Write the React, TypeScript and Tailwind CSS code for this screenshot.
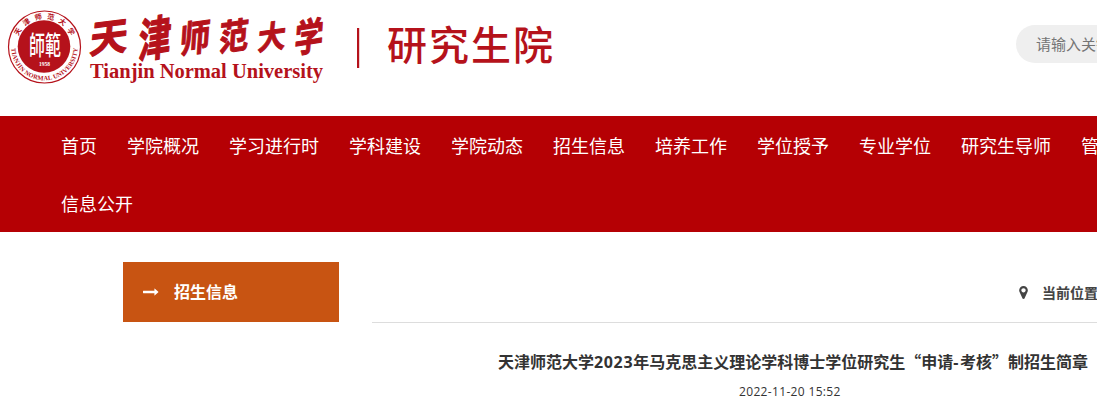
const navItems = [
  "首页", "学院概况", "学习进行时", "学科建设", "学院动态", "招生信息",
  "培养工作", "学位授予", "专业学位", "研究生导师", "管理规定",
];

const wordmark = [
  { ch: "天", cx: 109, cy: 37, sx: 1.06, sy: 1.06 },
  { ch: "津", cx: 155, cy: 38, sx: 0.9, sy: 1.3 },
  { ch: "师", cx: 195, cy: 37.5, sx: 0.84, sy: 1.02 },
  { ch: "范", cx: 234, cy: 36, sx: 0.82, sy: 0.98 },
  { ch: "大", cx: 272, cy: 36.5, sx: 0.78, sy: 0.88 },
  { ch: "学", cx: 309, cy: 36.5, sx: 0.8, sy: 1.06 },
];

function Seal() {
  return (
    <g fill="#b5121b" textAnchor="middle">
      <circle cx="44.5" cy="47" r="36" fill="#fff" stroke="#b5121b" strokeWidth="1.2" />
      <circle cx="44" cy="46.5" r="26.3" />
      <path id="sealTop" d="M16.3 47a28.2 28.2 0 0 1 56.4 0" fill="none" />
      <path id="sealBottom" d="M11.2 47a33.3 33.3 0 0 0 66.6 0" fill="none" />
      <text fontSize="7.2" fontWeight="700" className="font-['Noto_Sans_CJK_SC',sans-serif]">
        <textPath href="#sealTop" startOffset="50%" textLength="66">天津师范大学</textPath>
      </text>
      <text fontSize="6.4" fontWeight="700" className="font-['Liberation_Serif',serif]">
        <textPath href="#sealBottom" startOffset="50%" textLength="102">TIANJIN NORMAL UNIVERSITY</textPath>
      </text>
      <g fill="#fff">
        <text transform="translate(45 54.6) scale(.76 1.24)" fontSize="21" fontWeight="500" className="font-['Noto_Sans_CJK_TC',sans-serif]">師範</text>
        <text x="44.5" y="66" fontSize="5.5" fontWeight="700" className="font-['Liberation_Serif',serif]">1958</text>
      </g>
    </g>
  );
}

function Logo() {
  return (
    <svg width="570" height="100" viewBox="0 0 570 100" className="block shrink-0" aria-label="天津师范大学 研究生院">
      <Seal />
      <g fill="#b5121b">
        {wordmark.map((c) => (
          <text
            key={c.ch}
            transform={`translate(${c.cx} ${c.cy}) scale(${c.sx} ${c.sy}) skewY(-7) skewX(-5)`}
            y="13.5"
            fontSize="36"
            fontWeight="700"
            stroke="#b5121b"
            strokeWidth="1"
            strokeLinejoin="round"
            textAnchor="middle"
            className="font-['Noto_Sans_CJK_SC',sans-serif]"
          >
            {c.ch}
          </text>
        ))}
        <text x="90" y="78" fontSize="20" fontWeight="700" textLength="233" lengthAdjust="spacingAndGlyphs" className="font-['Liberation_Serif',serif]">
          Tianjin Normal University
        </text>
        <rect x="357" y="28" width="2.2" height="40" />
        <text x="387" y="60" fontSize="40" fontWeight="500" textLength="166" className="font-['Noto_Sans_CJK_SC',sans-serif]">
          研究生院
        </text>
      </g>
    </svg>
  );
}

export default function App() {
  return (
    <div className="h-[406px] w-full overflow-hidden bg-white font-['Noto_Sans_CJK_SC',sans-serif] text-[#333]">
      <header className="flex h-[116px] items-start justify-between overflow-hidden">
        <Logo />
        <div className="mt-[25px] flex h-[38px] w-[81px] shrink-0 items-center overflow-hidden whitespace-nowrap rounded-l-[19px] bg-[#efefef] pl-5 text-[15px] text-[#757575]">
          请输入关键字
        </div>
      </header>

      <nav className="h-[116px] overflow-hidden bg-[#b50004] pl-[61px] text-[18px] leading-[58px] text-white">
        <div className="flex gap-[30px] whitespace-nowrap">
          {navItems.map((item) => (
            <a key={item} className="shrink-0">{item}</a>
          ))}
        </div>
        <a className="block">信息公开</a>
      </nav>

      <main className="flex pl-[123px] pt-[30px]">
        <aside className="flex h-[60px] w-[216px] shrink-0 items-center gap-[15px] bg-[#c85412] pl-5 text-[16px] font-bold text-white">
          <svg width="16" height="16" viewBox="0 0 1792 1792" fill="currentColor">
            <path d="M1728 893q0 14-10 24l-384 354q-16 14-35 6-19-9-19-29v-224h-1248q-14 0-23-9t-9-23v-192q0-14 9-23t23-9h1248v-224q0-21 19-29t35 5l384 350q10 10 10 23z" />
          </svg>
          <span className="pb-[2px]">招生信息</span>
        </aside>
        <section className="ml-[33px] min-w-0 flex-1 overflow-hidden">
          <div className="flex h-[61px] items-center whitespace-nowrap border-b border-[#ddd] pl-[647px] text-[14px] font-bold text-[#444]">
            <svg width="9" height="13" viewBox="0 128 1024 1536" fill="currentColor" className="shrink-0">
              <path d="M768 640q0-106-75-181t-181-75-181 75-75 181 75 181 181 75 181-75 75-181zm256 0q0 109-33 179l-364 774q-16 33-47.5 52t-67.5 19-67.5-19-46.5-52l-365-774q-33-70-33-179 0-212 150-362t362-150 362 150 150 362z" />
            </svg>
            <span className="ml-[14px]">当前位置：</span>
          </div>
          <h1 className="ml-[126px] mt-[26px] whitespace-nowrap text-[16px] font-bold leading-6">
            天津师范大学<span className="font-['Open_Sans',sans-serif] tracking-[0.65px]">2023</span>年马克思主义理论学科博士学位研究生“申请<span className="font-['Open_Sans',sans-serif] tracking-[1.6px]">-</span>考核”制招生简章
          </h1>
          <p className="ml-[367px] mt-[9px] whitespace-nowrap font-['Open_Sans',sans-serif] text-[12px] leading-[18px] tracking-[0.34px]">2022-11-20 15:52</p>
        </section>
      </main>
    </div>
  );
}
